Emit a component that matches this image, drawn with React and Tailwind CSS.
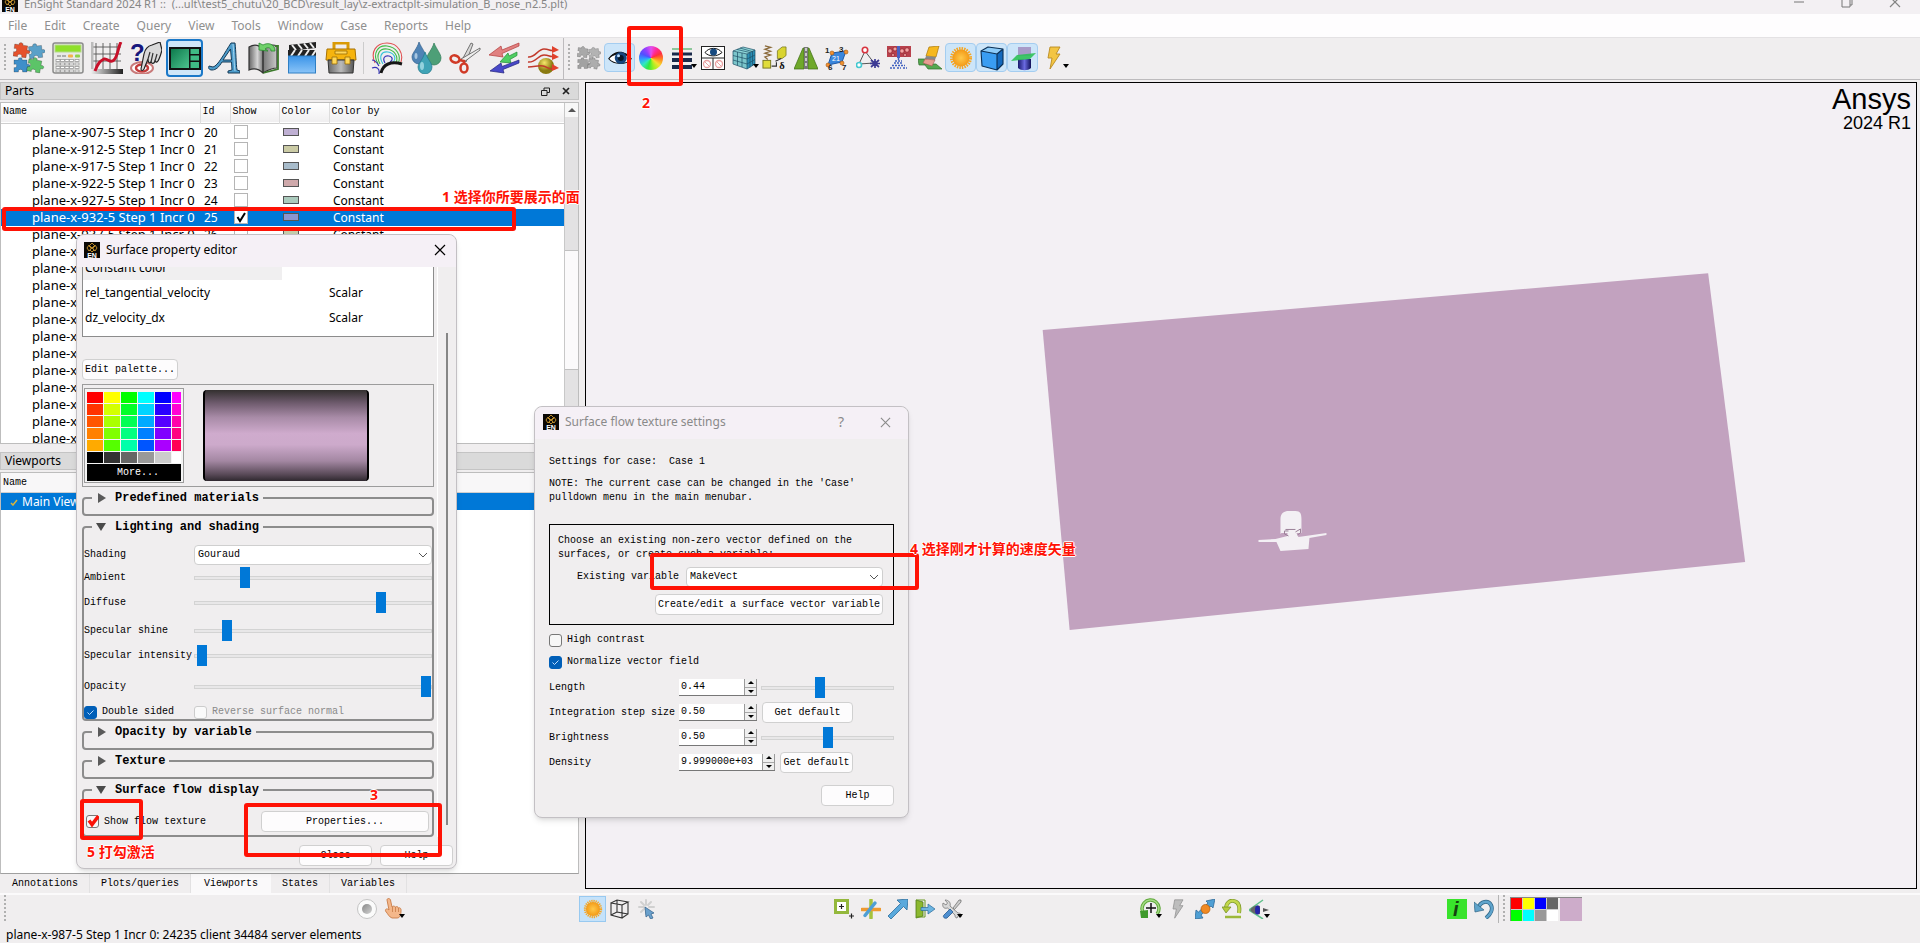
import React from "react";

const UI = "font-['Noto_Sans','Noto_Sans_CJK_SC',sans-serif]";
const MONO = "font-['Liberation_Mono','Noto_Sans_CJK_SC',monospace]";

/* ---------- icons ---------- */

function Svg({ s = 32, box = 32, children }) {
  return (
    <svg width={s} height={s} viewBox={`0 0 ${box} ${box}`} fill="none" aria-hidden="true" className="shrink-0">
      {children}
    </svg>
  );
}

const PIECE =
  "M1 3H5.5C4 0 10.500 0 9 3H14V7.500C18 6 18 12 14 10.500V15H9.500C11 11.500 4 11.500 5.500 15H1V10.500C4.500 12 4.500 5.500 1 7.500Z";

function Puzzle({ s, c }) {
  return (
    <Svg s={s}>
      <g stroke="#0004" strokeWidth=".8">
        <path d={PIECE} fill={c[0]} transform="rotate(8 8 8)" />
        <path d={PIECE} fill={c[1]} transform="translate(15 1) rotate(-6 8 8)" />
        <path d={PIECE} fill={c[2]} transform="translate(0 15)" />
        <path d={PIECE} fill={c[3]} transform="translate(14 15) rotate(10 8 8)" />
      </g>
    </Svg>
  );
}

const Calculator = () => (
  <Svg>
    <rect x="1" y="1" width="30" height="30" rx="2" fill="#e9e9e7" stroke="#8b8b8b" strokeWidth="1.500" />
    <rect x="3" y="3" width="26" height="7" fill="#8fe02a" stroke="#b5d98a" />
    <path d="M5 14h4M10 14h4" stroke="#999" strokeWidth="1.500" />
    <rect x="16" y="12.500" width="5" height="3" rx="1" fill="#f3b24a" />
    <rect x="23" y="12.500" width="5" height="3" rx="1" fill="#8fd24a" />
    <g fill="#fff" stroke="#9a9a9a" strokeWidth=".8">
      {[17.500, 21, 24.500, 28].map((y) => [4, 8.500, 13, 17.500, 23].map((x) => <rect key={x + "-" + y} x={x} y={y} width="4" height="2" />))}
    </g>
  </Svg>
);

const Plot = () => (
  <Svg>
    <path d="M5 1v26M12 1v26M19 1v26M26 1v26M2 5h28M2 12h28M2 19h28" stroke="#555" strokeWidth=".9" />
    <path d="M1 0v28" stroke="#bbb" strokeWidth="3" />
    <rect x="0" y="27" width="32" height="5" fill="url(#plotg)" />
    <path d="M4 29C7 21 9 19 13 17C17 16 19 22 23 18S27 5 30 0" stroke="#c8102a" strokeWidth="3" />
    <defs><linearGradient id="plotg"><stop stopColor="#eee" /><stop offset="1" stopColor="#222" /></linearGradient></defs>
  </Svg>
);

const QueryHand = () => (
  <Svg>
    <text x="0" y="19" fontSize="24" fontWeight="bold" fill="#17177c" fontFamily="Liberation Sans">?</text>
    <ellipse cx="12" cy="26" rx="11" ry="6" fill="#fff" stroke="#c97a7a" strokeWidth="2" />
    <ellipse cx="12" cy="26" rx="6" ry="3.500" stroke="#c43c3c" strokeWidth="2.500" />
    <path d="M11 27L14 12C15 7 18 4 22 3L30 0L32 8C31 12 30 15 29 17C28 20 26 21 25 19C24 22 22 22 21 20C19 22 18 20 18 17L14 27C13 29 11 29 11 27Z" fill="#d9d9d9" stroke="#222" strokeWidth="1.200" />
    <path d="M18 17L20 10M21 20L23 11M25 19L27 12" stroke="#333" strokeWidth="1.200" />
  </Svg>
);

const ViewportIcon = () => (
  <Svg>
    <rect x="0" y="5" width="32" height="23" fill="#111" />
    <rect x="2" y="7" width="18" height="19" fill="url(#vpg)" />
    <rect x="21.500" y="7" width="8.500" height="5" fill="#3fba85" />
    <rect x="21.500" y="13.500" width="8.500" height="5" fill="#3fba85" />
    <rect x="21.500" y="20" width="8.500" height="6" fill="#3fba85" />
    <defs><linearGradient id="vpg" x2="1" y2="1"><stop stopColor="#0d7a4c" /><stop offset="1" stopColor="#4cc38e" /></linearGradient></defs>
  </Svg>
);

const LetterA = () => (
  <Svg>
    <path d="M23 1L27 1C28 9 28 22 29 28L32 29V31H20V29L24 28L23.500 20H14C11 25 8 28 4 28C1 28 0 26 1 24L5 25C10 24 17 10 23 1ZM15 18H23.500L22.500 7Z" fill="#4c9ccb" stroke="#173b57" strokeWidth="1" fillRule="evenodd" />
    <path d="M25 2C26 12 26 22 27 29" stroke="#a7d6f0" strokeWidth="1" />
  </Svg>
);

const Book = () => (
  <Svg>
    <path d="M2 5C7 2 12 3 16 7C20 3 26 2 30 4V26C25 26 21 28 16 31C12 27 7 26 2 28Z" fill="url(#bkg)" stroke="#333" strokeWidth="1.200" />
    <path d="M28 4h3v23l-15 4" stroke="#3c7a2c" strokeWidth="1.800" />
    <path d="M16 7v24" stroke="#333" strokeWidth="1.500" />
    <path d="M12 8V1l4 2c5-3 12-1 12 6h-4c0-4-4-4-6-2l3 2z" fill="#6fd06a" stroke="#2a8a30" strokeWidth=".8" />
    <defs><linearGradient id="bkg"><stop stopColor="#666" /><stop offset=".3" stopColor="#d5d5d5" /><stop offset=".5" stopColor="#777" /><stop offset="1" stopColor="#c9c9c9" /></linearGradient></defs>
  </Svg>
);

const Clapper = () => (
  <Svg>
    <path d="M3 3L30 0V6L3 9Z" fill="#222" />
    <path d="M6 3l4 5M12 2l4 5M18 1.500l4 5M24 1l4 5" stroke="#eee" strokeWidth="2" />
    <rect x="2" y="8" width="28" height="6" fill="#222" />
    <path d="M9 8l-4 6M16 8l-4 6M23 8l-4 6M30 8l-4 6" stroke="#eee" strokeWidth="2" />
    <rect x="2.500" y="14" width="27" height="17" fill="url(#clg)" stroke="#2f7fc4" />
    <defs><linearGradient id="clg" x2="0" y2="1"><stop stopColor="#3b94e8" /><stop offset="1" stopColor="#8ac4f8" /></linearGradient></defs>
  </Svg>
);

const Toolbox = () => (
  <Svg>
    <path d="M9 8V1h14v7" stroke="#d99a06" strokeWidth="3" />
    <path d="M2 7h28l1 11H1z" fill="#f6b40e" stroke="#a87304" />
    <path d="M3 18h26l-1 13H4z" fill="url(#tbg)" stroke="#333" />
    <path d="M10 9h12v3H10zM7 15h5v7H7zM20 15h5v7h-5z" fill="#ffd75a" stroke="#9a6c05" strokeWidth=".8" />
    <defs><linearGradient id="tbg"><stop stopColor="#666" /><stop offset=".5" stopColor="#bbb" /><stop offset="1" stopColor="#555" /></linearGradient></defs>
  </Svg>
);

const Contours = () => (
  <Svg>
    <path d="M4 21C-1 10 5 1 16 1S34 12 29 22" stroke="#e05252" strokeWidth="1.100" />
    <path d="M7 22C1 11 7 3 16 4S31 13 27 22M9 22C4 12 9 6 16 7S28 14 25 21" stroke="#3fba45" strokeWidth="1.100" />
    <path d="M12 22C7 14 11 9 17 10S26 16 22 20" stroke="#33c3d8" strokeWidth="1.100" />
    <path d="M14 21C11 16 14 13 18 14S22 18 19 20M1 18c4 0 5 3 7 6M1 26c5-2 8 1 7 6" stroke="#3535b8" strokeWidth="1.200" />
    <path d="M10 31C12 22 20 19 31 22" stroke="#151515" strokeWidth="3" />
  </Svg>
);

const Drops = () => (
  <Svg>
    <path d="M9 0C12 7 16 11 16 15a7 7 0 0 1-14 0C2 11 7 7 9 0Z" fill="#4f83b5" stroke="#37628c" strokeWidth=".7" />
    <path d="M24 1C27 8 31 12 31 16a7 7 0 0 1-14 0C17 12 22 8 24 1Z" fill="#4d9f77" stroke="#2f7a56" strokeWidth=".7" />
    <path d="M15 10C18 18 22 21 22 25a7 7 0 0 1-14 0C8 21 13 18 15 10Z" fill="#3fa3b6" stroke="#23798a" strokeWidth=".7" />
    <ellipse cx="12" cy="24" rx="2" ry="4" fill="#b8e5ee" opacity=".7" />
    <ellipse cx="6" cy="14" rx="1.500" ry="3" fill="#cfe2f3" opacity=".7" />
  </Svg>
);

const Scissors = () => (
  <Svg>
    <path d="M22 1L13 18L17 20L24 2Z" fill="#d8d8d8" stroke="#555" strokeWidth=".8" />
    <path d="M31 6L12 17L15 20L31 8Z" fill="#eee" stroke="#555" strokeWidth=".8" />
    <ellipse cx="6" cy="17" rx="4.500" ry="3.500" stroke="#d03a26" strokeWidth="2.500" transform="rotate(20 6 17)" />
    <ellipse cx="15" cy="26" rx="3.500" ry="4.500" stroke="#d03a26" strokeWidth="2.500" />
    <path d="M10 18l5 1v3" stroke="#d03a26" strokeWidth="2.500" />
  </Svg>
);

const Vectors = () => (
  <Svg>
    <path d="M31 1L14 8L13 4L1 13L15 15L14 11.500L31 4Z" fill="#e08080" stroke="#b33a3a" strokeWidth=".7" />
    <path d="M29 10L21 14L20 11L12 20L23 21L22 17.500L29 13.500Z" fill="#4fce62" stroke="#248d36" strokeWidth=".7" />
    <path d="M31 18L14 24.500L13 21L2 29L16 31L15 27.500L31 21Z" fill="#4848c8" stroke="#22227c" strokeWidth=".7" />
  </Svg>
);

const FlowBall = () => (
  <Svg>
    <circle cx="19" cy="24" r="8" fill="url(#fbg)" />
    <path d="M1 15C8 16 11 7 17 7S23 10 28 8M1 20C9 21 11 13 17 13S23 16 28 14M1 25C8 25 11 23 16 24S23 29 29 26" stroke="#c23a2c" strokeWidth="1.500" />
    <path d="M25 4l7 4-7 3zM25 11l7 4-7 3zM25 22l7 4-7 3z" fill="#e0402c" />
    <defs><radialGradient id="fbg" cx=".4" cy=".3"><stop stopColor="#f7e76a" /><stop offset="1" stopColor="#8a7a10" /></radialGradient></defs>
  </Svg>
);

const Eye = () => (
  <Svg s={24}>
    <path d="M1 17C7 8 22 5 31 17C24 26 8 25 1 17Z" fill="#fff" stroke="#111" strokeWidth="1.500" />
    <path d="M1 17C7 6 22 3 31 17C22 9 9 9 1 17Z" fill="#111" />
    <circle cx="17" cy="16" r="8" fill="#16457c" />
    <circle cx="17" cy="16" r="4" fill="#071726" />
    <circle cx="14" cy="13" r="2" fill="#bfe0ff" />
  </Svg>
);

const ColorWheel = () => (
  <span className="h-6 w-6 rounded-full bg-[conic-gradient(from_0deg,#e050f0,#ff2a98,#ff3040,#ff8a20,#f4e030,#a0f020,#30e840,#30e8c0,#30a0ff,#5050ff,#9040ff,#e050f0)]" />
);

const LineWidths = () => (
  <Svg s={24} box={24}>
    <path d="M2 3h20" stroke="#8cc79a" strokeWidth="2" />
    <path d="M2 8h20" stroke="#1b2a4a" strokeWidth="3" />
    <path d="M2 14h20M2 21h20" stroke="#1b2a4a" strokeWidth="4" />
  </Svg>
);

const EyeGrid = () => (
  <Svg s={24} box={24}>
    <rect x=".500" y=".500" width="23" height="23" fill="#fff" stroke="#222" />
    <path d="M0 12h24M12 12v12" stroke="#222" />
    <path d="M4 6.500C8 1 17 1 21 6.500C16 11 8 11 4 6.500Z" fill="#fff" stroke="#111" />
    <circle cx="12.500" cy="6" r="3.500" fill="#174a80" />
    <circle cx="6" cy="18" r="3.500" stroke="#e9a0a0" strokeWidth="1.300" /><path d="M4 16l4 4" stroke="#e9a0a0" />
    <circle cx="18" cy="18" r="3.500" stroke="#e9a0a0" strokeWidth="1.300" /><path d="M16 16l4 4" stroke="#e9a0a0" />
  </Svg>
);

const GridCube = () => (
  <Svg s={24} box={24}>
    <path d="M1 5L11 1L23 4L15 8Z" fill="#8fd7d9" /><path d="M1 5L15 8V23L1 18Z" fill="#7cc6cb" /><path d="M15 8L23 4V18L15 23Z" fill="#2b8fb5" />
    <path d="M1 5L15 8V23L1 18ZM1 5L11 1L23 4L15 8M23 4V18L15 23M1 9.500L15 13L23 9M1 14L15 18L23 13.500M5.500 6V19.500M10 7V21M18 6.500V21.500M20.500 5V20M5 3.500L18 6.500M8 2L20 5.500" stroke="#1c4f66" strokeWidth=".7" />
  </Svg>
);

const Spring = () => (
  <Svg s={25} box={26}>
    <path d="M3 1L9 2.500L3 4.500L9 6.500L3 8.500L9 10.500L3 12.500L6 15" stroke="#8a6a3a" strokeWidth="1.300" />
    <rect x="1" y="16" width="8" height="8" fill="#e0dc3a" stroke="#7a7820" />
    <path d="M16 6l5-4 4 0v9l-4 3h-5z" fill="#d9d430" stroke="#7a7820" strokeWidth=".8" />
    <path d="M20 14L14 17M10 22h5v-4" stroke="#333" strokeWidth="1.200" />
    <text x="18" y="25" fontSize="11" fontWeight="bold" fill="#111" fontFamily="Liberation Serif">δ</text>
  </Svg>
);

const Road = () => (
  <Svg s={24} box={24}>
    <path d="M9 2L0 23H10V2ZM15 2L24 23H14V2Z" fill="#6fa82a" stroke="#3c6b12" strokeWidth=".7" />
    <path d="M10 1h4v22h-4z" fill="#777" /><path d="M12 2v20" stroke="#fff" strokeWidth="1.200" strokeDasharray="3 2" />
  </Svg>
);

const Nodes = () => (
  <Svg s={24} box={24}>
    <path d="M7 7L21 5L17 16L3 19Z" fill="#3a86dc" stroke="#1d5aa8" />
    <g fill="#f09030" stroke="#a3560e" strokeWidth=".6"><circle cx="7" cy="7" r="2" /><circle cx="21" cy="6" r="2" /><circle cx="3" cy="19" r="2" /><circle cx="17" cy="17" r="2" /></g>
    <g fontSize="8" fontWeight="bold" fill="#222" fontFamily="Liberation Sans"><text x="0" y="7">1</text><text x="14" y="6">3</text><text x="3" y="24">6</text><text x="17" y="24">7</text></g>
    <text x="7" y="15" fontSize="7" fill="#fff" fontFamily="Liberation Sans">21</text>
  </Svg>
);

const Triangle3 = () => (
  <Svg s={24} box={24}>
    <path d="M9 5L3 18L18 17Z" stroke="#555" strokeWidth="1" />
    <circle cx="9" cy="4" r="2.700" fill="#fff" stroke="#d8333f" strokeWidth="1.600" />
    <circle cx="3" cy="19" r="2.500" fill="#fff" stroke="#44c8d0" strokeWidth="1.600" />
    <path d="M15 14l8 7M23 14l-8 7M19 13v9M14 17.500h10" stroke="#3d3a94" strokeWidth="1.700" />
  </Svg>
);

const Sprinkler = () => (
  <Svg s={24} box={24}>
    <rect x="0" y="0" width="24" height="11" fill="#b8414c" />
    <g fill="#f4a3a3" stroke="#7d1620" strokeWidth=".6"><circle cx="3" cy="5" r="2.200" /><circle cx="8" cy="3" r="2" /><circle cx="15" cy="5" r="2.200" /><circle cx="20" cy="4" r="2.200" /><circle cx="6" cy="9" r="1.500" /><circle cx="18" cy="9" r="1.500" /></g>
    <rect x="10" y="0" width="3" height="12" fill="#4a60c0" />
    <path d="M11.500 12v3M8 15h7M7 17h9M5 19.500h13M3 22h5M10 22h4M16 22h4" stroke="#3f60c0" strokeWidth="1.500" strokeDasharray="2 1" />
  </Svg>
);

const Eraser = () => (
  <Svg s={24} box={24}>
    <path d="M0 13H9L6 18H18L24 23H10L7 19H1Z" fill="#55a850" stroke="#2f6f2c" strokeWidth=".7" />
    <path d="M11 1L21 0L18 11L8 10Z" fill="#f6b81e" stroke="#a9770a" strokeWidth=".7" />
    <path d="M8 10L18 11L17 14L7 13Z" fill="#888" /><path d="M7 13L17 14L14 20L5 17Z" fill="#e79d92" stroke="#a05a50" strokeWidth=".6" />
  </Svg>
);

const Sun = ({ s = 24 }) => (
  <Svg s={s} box={24}>
    <circle cx="12" cy="12" r="9.500" stroke="#f6a623" strokeWidth="3" strokeDasharray="1.500 1" />
    <circle cx="12" cy="12" r="8.500" fill="url(#sung)" />
    <defs><radialGradient id="sung"><stop stopColor="#ffc94a" /><stop offset="1" stopColor="#f39a17" /></radialGradient></defs>
  </Svg>
);

const BlueCube = () => (
  <Svg s={26} box={26}>
    <path d="M2 6L9 2L24 4L18 9Z" fill="#8ccbf9" /><path d="M2 6L18 9V25L3 21Z" fill="#3a9df2" /><path d="M18 9L24 4V19L18 25Z" fill="#1469bd" />
    <path d="M2 6L9 2L24 4L18 9ZM2 6L3 21L18 25V9M24 4V19L18 25" stroke="#0a2f55" strokeWidth="1.100" strokeLinejoin="round" />
  </Svg>
);

const ClipCylinder = () => (
  <Svg s={26} box={26}>
    <path d="M8 2h13v9H8z" fill="#a79ac8" /><path d="M8 14h13v9c-3 3-10 3-13 0z" fill="url(#cyg)" />
    <path d="M7 10L26 8L20 14L1 16Z" fill="#2fc158" opacity=".9" />
    <defs><linearGradient id="cyg"><stop stopColor="#17176b" /><stop offset=".5" stopColor="#6a6ae0" /><stop offset="1" stopColor="#101058" /></linearGradient></defs>
  </Svg>
);

const Bolt = ({ s = 24, c = "#f3c544", e = "#b98a20" }) => (
  <Svg s={s} box={24}>
    <path d="M8 1H18L14 8H18L8 23L10 12H6Z" fill={c} stroke={e} strokeWidth=".9" strokeLinejoin="round" />
  </Svg>
);

const Record = () => (
  <Svg s={22} box={22}>
    <circle cx="11" cy="11" r="9.500" fill="#fbfbfb" stroke="#c4c4c4" /><circle cx="11" cy="11" r="5" fill="url(#recg)" />
    <defs><linearGradient id="recg" x2="1" y2="1"><stop stopColor="#888" /><stop offset="1" stopColor="#d2d2d2" /></linearGradient></defs>
  </Svg>
);

const Hand = () => (
  <Svg s={22} box={22}>
    <path d="M4 2C4 0 7 0 7.500 2L9 9C11 7 12 9 12.500 9C14 8 15 9 15.500 10C17 9 18.500 11 18 13C18 17 17 20 14 20H9C6 19 5 16 2.500 13C2 11 4 10 6 12Z" fill="#f4b78a" stroke="#c77c48" strokeWidth=".9" />
    <path d="M9.500 9v5M12.500 9v5M15.500 10v4" stroke="#c77c48" strokeWidth=".8" />
  </Svg>
);

const WireCube = () => (
  <Svg s={20} box={20}>
    <path d="M1 4L12 6V19L1 16ZM1 4L7 1L18 3L12 6M18 3V15L12 19M7 1V13L18 15M7 13L1 16" stroke="#333" strokeWidth="1.100" />
  </Svg>
);

const ClickBurst = () => (
  <Svg s={20} box={20}>
    <path d="M9 1v5M9 11v4M2 8h5M12 8h5M4 3l3 3M14 3l-3 3M4 13l3-3" stroke="#d0d0d0" strokeWidth="2" strokeLinecap="round" />
    <path d="M8 8L17 14L14 15L16 19L13.500 20L11.500 16L9 18Z" fill="#6aa0cc" stroke="#2f5f8a" strokeWidth=".7" />
  </Svg>
);

const AddFrame = () => (
  <Svg s={20} box={20}>
    <rect x="1.500" y="1.500" width="12" height="12" fill="#fff" stroke="#94b83c" strokeWidth="3" />
    <path d="M7.500 5v5M5 7.500h5M17.500 14.500v5M15 17h5" stroke="#222" strokeWidth="1.200" />
  </Svg>
);

const Axes = () => (
  <Svg s={20} box={20}>
    <path d="M10 1V19" stroke="#a6c23c" strokeWidth="3.500" strokeLinecap="round" /><path d="M1 10.500H19" stroke="#ef9a30" strokeWidth="3.500" strokeLinecap="round" /><path d="M4 16.500L14 4" stroke="#4f9fd4" strokeWidth="3.500" strokeLinecap="round" />
  </Svg>
);

const ArrowUp = () => (
  <Svg s={20} box={20}>
    <path d="M9 1L20 0L19 11L15.500 7.500L3 20L0 17L12.500 4.500Z" fill="#5aa9dc" stroke="#2a6c9c" strokeWidth=".8" />
  </Svg>
);

const DoorArrow = () => (
  <Svg s={20} box={20}>
    <path d="M1 1L8 3V17L1 19Z" fill="#8cb82e" stroke="#4f7a16" strokeWidth=".8" /><path d="M1 1h9v17h-9" stroke="#6b9a22" />
    <path d="M6 8.500H13V5L20 10L13 15V11.500H6Z" fill="#6cb4e0" stroke="#2a6c9c" strokeWidth=".7" />
  </Svg>
);

const Wrench = () => (
  <Svg s={20} box={20}>
    <path d="M3 1C7 1 9 4 8 7L16 14C19 14 20 16 19 18L16.500 16.500L15 19C13 19 13 17 13 16L5.500 9C2 10 0 8 1 4L4 6L5.500 4Z" fill="#d8d8d8" stroke="#777" strokeWidth=".8" />
    <path d="M19 1L17 1L11 9L12.500 10.500L19 3Z" fill="#ccc" stroke="#666" strokeWidth=".7" />
    <path d="M8 10L11 13L5 19C3 20 0 18 2 16Z" fill="#4f8fd0" stroke="#27598f" strokeWidth=".8" />
  </Svg>
);

const ResetCircle = () => (
  <Svg s={22} box={22}>
    <path d="M5 17A8.500 8.500 0 1 1 17 16" stroke="#5fa83a" strokeWidth="3.500" /><path d="M5 17A8.500 8.500 0 1 1 17 16" stroke="#a5dc85" strokeWidth="1.500" /><path d="M0 13L8 12L8 20L1 20Z" fill="#3f9a2c" />
    <path d="M11 5v10M6 10h10" stroke="#111" strokeWidth="1.500" />
  </Svg>
);

const BallArrows = () => (
  <Svg s={20} box={20}>
    <path d="M11 2L20 0L18 9L16 7L6 16L8 19L0 20L1 11L3.500 13L13 4Z" fill="#4f9fd4" stroke="#236090" strokeWidth=".7" />
    <circle cx="10.500" cy="10" r="4.500" fill="#f08a24" stroke="#b05c0c" strokeWidth=".7" />
  </Svg>
);

const TurnBack = () => (
  <Svg s={20} box={20}>
    <path d="M4 10C4 3 9 1 12 2C17 3 18 8 17 14" stroke="#7f9a2c" strokeWidth="4" /><path d="M4 10C4 3 9 1 12 2C17 3 18 8 17 14" stroke="#c3d84c" strokeWidth="2.500" />
    <path d="M0 8H9L4 14Z" fill="#b5cc3c" stroke="#6f8a1c" strokeWidth=".7" /><path d="M3 18h16" stroke="#9cb83a" strokeWidth="2.500" />
  </Svg>
);

const ViewCone = () => (
  <Svg s={20} box={20}>
    <path d="M0 11L14 1M0 11L14 20" stroke="#5fc08a" strokeWidth="1.500" /><path d="M1 11C4 6 9 6 11 7V15C8 16 4 15 1 11Z" fill="#666" />
    <ellipse cx="8.500" cy="11" rx="2.500" ry="4.500" fill="#2424a8" /><path d="M14 9l6 2-6 2z" fill="#555" />
  </Svg>
);

const InfoIcon = () => (
  <Svg s={20} box={20}>
    <rect width="20" height="20" fill="#39e32c" />
    <text x="6" y="17" fontSize="20" fontWeight="bold" fontStyle="italic" fill="#15400f" fontFamily="Liberation Sans">i</text>
  </Svg>
);

const Undo = () => (
  <Svg s={20} box={20}>
    <path d="M4 9C7 2 14 1 17 6C19 10 17 15 12 19" stroke="#2f6484" strokeWidth="4" /><path d="M4 9C7 2 14 1 17 6C19 10 17 15 12 19" stroke="#5fa4cc" strokeWidth="2.500" />
    <path d="M0 3L1 13L10 11Z" fill="#5fa4cc" stroke="#2f6484" strokeWidth=".7" />
  </Svg>
);

const EnLogo = () => (
  <Svg s={16} box={16}>
    <rect width="16" height="16" fill="#0b0905" />
    <path d="M8 1L11 4L8 7L5 4ZM5 3L8 6L5 9L3 6ZM11 3L13 6L11 9L8 6ZM8 5L10 8L8 10L6 8Z" stroke="#b98a2a" strokeWidth="1" />
    <text x="8" y="15.500" textAnchor="middle" fontSize="7" fontWeight="bold" fill="#fff" fontFamily="Liberation Sans">EN</text>
  </Svg>
);

const CloseX = ({ s = 12 }) => (
  <Svg s={s} box={12}><path d="M1 1L11 11M11 1L1 11" stroke="currentColor" strokeWidth="1.200" /></Svg>
);

const Chevron = () => (
  <svg width="10" height="6" viewBox="0 0 10 6" fill="none" aria-hidden="true" className="pointer-events-none absolute top-1/2 right-1 -translate-y-1/2">
    <path d="M1 1l4 4 4-4" stroke="#555" />
  </svg>
);

/* ---------- controls ---------- */

function Grip() {
  return <span className="h-7 w-0.5 shrink-0 bg-[repeating-linear-gradient(#b0b0b0_0_2px,transparent_2px_4px)]" />;
}

function BigTool({ label, active, children }) {
  return (
    <button aria-label={label} className="flex w-[39px] shrink-0 items-center justify-center">
      <span className={active ? "grid h-[38px] w-[37px] place-items-center rounded-sm border-2 border-[#1b78c8] bg-[#cfe6f8]" : "grid h-[38px] w-[37px] place-items-center"}>
        {children}
      </span>
    </button>
  );
}

function SmallTool({ label, active, menu, children }) {
  return (
    <button
      aria-label={label}
      className={
        active
          ? "relative grid h-[29px] w-[31px] shrink-0 place-items-center rounded-sm border border-[#a4cdf0] bg-[#cce5f9]"
          : "relative grid h-[29px] w-[31px] shrink-0 place-items-center"
      }
    >
      {children}
      {menu && <span className="absolute right-0 bottom-1 border-x-[3px] border-t-4 border-x-transparent border-t-black" />}
    </button>
  );
}

function TinyTool({ label, active, menu, children }) {
  return (
    <button aria-label={label} className={active ? "relative grid h-[26px] w-[27px] place-items-center border border-[#98c9f0] bg-[#c5e2fa]" : "relative grid h-[26px] w-[27px] place-items-center"}>
      {children}
      {menu && <span className="absolute right-0.5 bottom-1 border-x-[3px] border-t-4 border-x-transparent border-t-black" />}
    </button>
  );
}

function Btn({ className, children }) {
  return (
    <button className={"flex h-[21px] items-center justify-center rounded border border-[#d0d0d0] bg-[#fdfcfd] whitespace-nowrap " + className}>
      {children}
    </button>
  );
}

function Check({ id, label, checked, disabled, tone }) {
  const base = "col-start-1 row-start-1 h-[13px] w-[13px] appearance-none rounded-[3px] border ";
  const look = checked && !tone ? "border-[#005fb8] bg-[#005fb8]" : disabled ? "border-[#cccccc] bg-[#fafafa]" : "border-[#777777] bg-[#f7f7f7]";
  return (
    <span className="flex items-center gap-[5px]">
      <span className="grid place-items-center">
        <input id={id} type="checkbox" defaultChecked={checked} disabled={disabled} className={base + look} />
        {checked && (
          <svg width="13" height="13" viewBox="0 0 13 13" fill="none" className="pointer-events-none col-start-1 row-start-1" aria-hidden="true">
            {tone === "red" ? <path d="M3 5.500L6 9.500L12.500 1" stroke="#fb1208" strokeWidth="3.500" /> : <path d="M3.500 6.500l2 2 4-4" stroke="#bcdcff" />}
          </svg>
        )}
      </span>
      <label htmlFor={id} className={disabled ? "text-[#8a8a8a]" : "text-black"}>{label}</label>
    </span>
  );
}

function Slider({ id, value }) {
  return (
    <input
      id={id}
      type="range"
      defaultValue={value}
      className="h-[21px] w-full min-w-0 appearance-none bg-transparent [&::-webkit-slider-runnable-track]:h-1 [&::-webkit-slider-runnable-track]:border [&::-webkit-slider-runnable-track]:border-[#d3d3d3] [&::-webkit-slider-runnable-track]:bg-[#e8e7e8] [&::-webkit-slider-thumb]:-mt-[10px] [&::-webkit-slider-thumb]:h-[21px] [&::-webkit-slider-thumb]:w-[10px] [&::-webkit-slider-thumb]:appearance-none [&::-webkit-slider-thumb]:bg-[#0078d7]"
    />
  );
}

function Select({ id, value, className }) {
  return (
    <span className={"relative block " + className}>
      <select id={id} className="block h-5 w-full appearance-none rounded-sm border border-[#cfcfcf] bg-white px-[3px]">
        <option>{value}</option>
      </select>
      <Chevron />
    </span>
  );
}

function Spin({ id, value, className }) {
  return (
    <span className={"flex h-[17px] shrink-0 border-b border-[#777777] bg-white " + className}>
      <input id={id} defaultValue={value} className="w-full min-w-0 bg-transparent pl-0.5 outline-none" />
      <span className="flex w-[13px] shrink-0 flex-col border-r border-l border-[#9a9a9a] bg-[#efefef]">
        <button aria-label={"Increase " + id} className="grid flex-1 place-items-center border-b border-[#a8a8a8]">
          <span className="border-x-[3px] border-b-[3px] border-x-transparent border-b-black" />
        </button>
        <button aria-label={"Decrease " + id} className="grid flex-1 place-items-center">
          <span className="border-x-[3px] border-t-[3px] border-x-transparent border-t-black" />
        </button>
      </span>
    </span>
  );
}

function Group({ title, open, className, children }) {
  return (
    <fieldset className={"rounded border-2 border-[#8c8c8c] " + className}>
      <legend className="ml-2 px-1">
        <button className="flex h-3.5 items-center gap-[9px] text-xs leading-[14px] font-bold">
          {open ? (
            <span className="border-x-[5px] border-t-8 border-x-transparent border-t-[#4a4a4a]" />
          ) : (
            <span className="ml-0.5 border-y-[5px] border-l-8 border-y-transparent border-l-[#5a5a5a]" />
          )}
          {title}
        </button>
      </legend>
      {children}
    </fieldset>
  );
}

/* ---------- panels ---------- */

function DockHeader({ title }) {
  return (
    <div className="flex h-[18px] items-center justify-between border border-[#c4c4c4] bg-[#dadada] pr-2 pl-1 text-xs">
      <span>{title}</span>
      <span className="flex items-center gap-3">
        <button aria-label={"Undock " + title}>
          <Svg s={9} box={9}><path d="M3 3V1h5.500v4.500H6M.500 3.500H6v5H.500z" stroke="#222" /></Svg>
        </button>
        <button aria-label={"Close " + title}>
          <Svg s={8} box={8}><path d="M1 1l6 6M7 1L1 7" stroke="#222" strokeWidth="1.700" /></Svg>
        </button>
      </span>
    </div>
  );
}

const SWATCHES = ["#bfb0d3", "#cbcba5", "#a8bccb", "#cfa9ab", "#abcbbd", "#8b95d0", "#c3ccab"];
const PARTS = Array.from({ length: 19 }, (_, i) => ({
  name: `plane-x-${907 + i * 5}-5 Step 1 Incr 0`,
  id: 20 + i,
  color: SWATCHES[i % 7],
  on: i === 5,
}));

function PartsTable() {
  return (
    <div className="flex h-[342px] overflow-hidden border border-[#bdbdbd] bg-white">
      <table className="w-full table-fixed border-collapse self-start text-left">
        <colgroup>
          <col className="w-[199px]" /><col className="w-[30px]" /><col className="w-[49px]" /><col className="w-[50px]" /><col />
        </colgroup>
        <thead className={"text-[10px] leading-[14px] " + MONO}>
          <tr className="h-5 border-b border-[#cfcfcf] bg-linear-to-b from-white to-[#f0eff0]">
            {["Name", "Id", "Show", "Color", "Color by"].map((h) => (
              <th key={h} className="border-r border-[#dddddd] pb-0.5 pl-0.5 font-normal last:border-r-0">{h}</th>
            ))}
          </tr>
        </thead>
        <tbody className="text-xs leading-[17px]">
          {PARTS.map((p) => (
            <tr key={p.id} className={p.on ? "h-[17px] bg-[#0078d7] text-white" : "h-[17px]"}>
              <td className="pl-[31px] text-[13px] leading-[17px] whitespace-nowrap">{p.name}</td>
              <td className="pl-1">{p.id}</td>
              <td className="pl-1">
                <span className="grid h-[15px] w-[14px]">
                  <input type="checkbox" defaultChecked={p.on} aria-label={"Show " + p.name} className="col-start-1 row-start-1 h-[14px] w-[14px] appearance-none border border-[#b5b5b5] bg-white" />
                  {p.on && (
                    <svg width="14" height="14" viewBox="0 0 14 14" fill="none" className="pointer-events-none col-start-1 row-start-1" aria-hidden="true">
                      <path d="M3.500 7L6 11L11 3" stroke="#000" strokeWidth="2" />
                    </svg>
                  )}
                </span>
              </td>
              <td className="pl-1"><span className="block h-2 w-4 border border-[#555555]" style={{ backgroundColor: p.color }} /></td>
              <td className="pl-1">Constant</td>
            </tr>
          ))}
        </tbody>
      </table>
      <div className="flex w-[14px] shrink-0 flex-col border-l border-[#c8c8c8] bg-[#e3e2e3]">
        <span className="grid h-[14px] place-items-center bg-[#f7f7f7]">
          <span className="border-x-[4px] border-b-[4px] border-x-transparent border-b-[#555555]" />
        </span>
        <span className="mt-[133px] h-[120px] border-y border-[#c0c0c0] bg-[#fbfafb]" />
      </div>
    </div>
  );
}

function LeftDock() {
  return (
    <section className="flex w-[579px] shrink-0 flex-col pt-0.5">
      <DockHeader title="Parts" />
      <div className="mt-0.5"><PartsTable /></div>
      <div className="mt-2"><DockHeader title="Viewports" /></div>
      <div className="mt-0.5 flex-1 border border-[#bdbdbd] border-b-[#a0a0a0] bg-white">
        <table className="w-full">
          <thead className={"text-left text-[10px] " + MONO}>
            <tr className="h-[19px] border-b border-[#cfcfcf] bg-[#f8f7f8]"><th className="pl-0.5 font-normal">Name</th></tr>
          </thead>
          <tbody className="text-xs">
            <tr className="h-[17px] bg-[#0078d7] leading-[17px] text-white">
              <td className="pl-2">
                <span className="flex items-center gap-[3px]">
                  <Svg s={10} box={10}><path d="M2 7l2 2 4-5" stroke="#d9b53a" strokeWidth="1.500" /></Svg>
                  Main View
                </span>
              </td>
            </tr>
          </tbody>
        </table>
      </div>
      <nav className={"flex h-[19px] items-stretch pl-px text-[10px] " + MONO}>
        {["Annotations", "Plots/queries", "Viewports", "States", "Variables"].map((t) => (
          <button key={t} className={t === "Viewports" ? "bg-[#faf9fa] px-[13px]" : "border-r border-[#e2e1e2] px-[11px]"}>{t}</button>
        ))}
      </nav>
    </section>
  );
}

function Scene() {
  return (
    <main className="relative ml-1.5 flex flex-1 flex-col border border-black bg-[#f3f0f4]">
      <svg viewBox="586 83 1331 805" className="h-full w-full flex-1" aria-label="Cut plane x-932-5">
        <path d="M1043 330L1709 273L1746 562L1070 630Z" fill="#c2a2bf" />
        <g fill="#f3f0f4">
          <path d="M1281 534V519C1281 513 1285 511 1289 511H1296C1301 511 1302 514 1302 519V533H1282Z" />
          <path d="M1259 540L1276 539L1288 536V531H1296L1299 537L1327 533V535L1310 538L1309 549L1281 551L1277 542L1259 542Z" />
        </g>
        <path d="M1289 536L1285 534V531H1289M1286 529.500H1296M1296 532L1301 529V533L1298 535" stroke="#9a7f97" fill="none" />
      </svg>
      <div className="absolute top-0 right-[5px] text-right font-['Liberation_Sans',sans-serif] text-black">
        <div className="text-[29px] leading-[32px]">Ansys</div>
        <div className="text-lg leading-4">2024 R1</div>
      </div>
    </main>
  );
}

/* ---------- dialogs ---------- */

const HUES = [
  ["#ff0000", "#ffff00", "#00ff00", "#00ffff", "#0000ff", "#ff00ff"],
  ["#ff3300", "#d4ff00", "#00ff2a", "#00d4ff", "#2a00ff", "#ff00d4"],
  ["#ff5500", "#aaff00", "#00ff55", "#00aaff", "#5500ff", "#ff00aa"],
  ["#ff8000", "#80ff00", "#00ff80", "#0080ff", "#8000ff", "#ff0080"],
  ["#ffaa00", "#55ff00", "#00ffaa", "#0055ff", "#aa00ff", "#ff0055"],
  ["#000000", "#333333", "#666666", "#999999", "#cccccc", "#ffffff"],
];

function LabeledSlider({ id, label, value, className }) {
  return (
    <div className={"flex h-[22px] items-center " + className}>
      <label htmlFor={id} className="w-[110px] shrink-0 whitespace-nowrap">{label}</label>
      <Slider id={id} value={value} />
    </div>
  );
}

function SurfaceEditor() {
  return (
    <section role="dialog" aria-label="Surface property editor" className={"absolute top-[234px] left-[76px] w-[381px] rounded-lg border border-[#c3c0c4] bg-[#f0eeef] text-[10px] leading-[14px] shadow-md " + MONO}>
      <header className={"flex h-8 items-center rounded-t-lg bg-[#f5f0f6] pr-2.5 pb-0.5 pl-[7px] text-xs " + UI}>
        <EnLogo />
        <h2 className="ml-1.5 flex-1">Surface property editor</h2>
        <button aria-label="Close"><CloseX /></button>
      </header>
      <div className="flex">
        <div className="ml-[5px] w-[352px]">
          <div className={"h-[70px] border border-t-0 border-[#8c8c8c] bg-white pr-[15px] text-xs " + UI}>
            <table className="w-full table-fixed">
              <colgroup><col className="w-[199px]" /><col className="w-[44px]" /><col /></colgroup>
              <tbody>
                <tr>
                  <td className="bg-[#f0eff0] p-0"><div className="flex h-[13px] items-end overflow-hidden pl-0.5"><span className="leading-6">Constant color</span></div></td>
                </tr>
                <tr className="h-[25px]"><td className="pl-0.5">rel_tangential_velocity</td><td /><td className="pl-[3px]">Scalar</td></tr>
                <tr className="h-[25px]"><td className="pl-0.5">dz_velocity_dx</td><td /><td className="pl-[3px]">Scalar</td></tr>
              </tbody>
            </table>
          </div>
          <Btn className="mt-[22px] w-24">Edit palette...</Btn>
          <div className="mt-1 flex h-[103px] gap-[19px] border border-[#9c9c9c] pt-[3px] pl-px">
            <div className="h-[95px] w-[100px] border border-[#9c9c9c] bg-[#f4f4f4] pt-[3px] pl-0.5">
              <div className="grid w-[95px] grid-cols-[16px_16px_16px_16px_16px_9px] gap-px">
                {HUES.flat().map((c) => (
                  <button key={c} aria-label={c} className="h-[11px]" style={{ backgroundColor: c }} />
                ))}
              </div>
              <button className="mt-px block h-[17px] w-[94px] bg-black pl-2 text-white">More...</button>
            </div>
            <div className="mt-0.5 h-[91px] w-[166px] rounded-sm border-x-2 border-black bg-[linear-gradient(#33302f,#6d5a6c_14%,#a88ba7_30%,#cfabcd_48%,#cdaacb_60%,#a387a2_78%,#5d4d5c_92%,#2f282f)]" />
          </div>
          <Group title="Predefined materials" className="mt-1 h-[25px]" />
          <Group title="Lighting and shading" open className="mt-1 h-[201px]">
            <div className="mt-[11px] flex items-center">
              <label htmlFor="shading" className="w-[110px] shrink-0">Shading</label>
              <Select id="shading" value="Gouraud" className="w-full" />
            </div>
            <LabeledSlider id="ambient" label="Ambient" value={20} className="mt-0.5" />
            <LabeledSlider id="diffuse" label="Diffuse" value={80} className="mt-[3px]" />
            <LabeledSlider id="shine" label="Specular shine" value={12} className="mt-[6px]" />
            <LabeledSlider id="intensity" label="Specular intensity" value={1} className="mt-[3px]" />
            <LabeledSlider id="opacity" label="Opacity" value={100} className="mt-[9px]" />
            <div className="mt-[7px] grid grid-cols-[110px_1fr]">
              <Check id="double" label="Double sided" checked />
              <Check id="reverse" label="Reverse surface normal" disabled />
            </div>
          </Group>
          <Group title="Opacity by variable" className="mt-1 h-[25px]" />
          <Group title="Texture" className="mt-1 h-[25px]" />
          <Group title="Surface flow display" open className="mt-1 h-[54px]">
            <div className="mt-[14px] flex items-center justify-between pr-[3px] pl-0.5">
              <Check id="flowtex" label="Show flow texture" checked tone="red" />
              <Btn className="w-[168px]">Properties...</Btn>
            </div>
          </Group>
        </div>
        <div className="ml-[3px] flex w-[18px] justify-center border-l border-white">
          <span className="mt-[66px] mb-3 w-0.5 bg-[#868686]" />
        </div>
      </div>
      <footer className="mt-2 mb-0.5 flex justify-end gap-2 pr-[3px]">
        <Btn className="w-[73px]">Close</Btn>
        <Btn className="w-[73px]">Help</Btn>
      </footer>
    </section>
  );
}

function FlowSettings() {
  return (
    <section role="dialog" aria-label="Surface flow texture settings" className={"absolute top-[406px] left-[534px] w-[375px] rounded-lg border border-[#c3c0c4] bg-[#f0eeef] text-[10px] leading-[14px] shadow-md " + MONO}>
      <header className={"flex h-8 items-center rounded-t-lg bg-[#f5f0f6] pr-[17px] pb-0.5 pl-2 text-xs text-[#8a8a8a] " + UI}>
        <EnLogo />
        <h2 className="ml-1.5 flex-1">Surface flow texture settings</h2>
        <button aria-label="What's this" className="mr-9 text-sm">?</button>
        <button aria-label="Close"><CloseX s={11} /></button>
      </header>
      <div className="pr-[14px] pb-[11px] pl-[14px]">
        <p className="pt-4 whitespace-pre">Settings for case:  Case 1</p>
        <p className="mt-2">NOTE: The current case can be changed in the ′Case′<br />pulldown menu in the main menubar.</p>
        <div className="mt-[19px] h-[101px] border border-black px-2 pt-[9px]">
          <p>Choose an existing non-zero vector defined on the<br />surfaces, or create such a variable:</p>
          <div className="mt-[5px] flex items-center justify-end gap-[7px] pr-0.5">
            <label htmlFor="existing">Existing variable</label>
            <Select id="existing" value="MakeVect" className="w-[197px]" />
          </div>
          <div className="mt-[7px] flex justify-end pr-0.5"><Btn className="w-[228px]">Create/edit a surface vector variable</Btn></div>
        </div>
        <div className="mt-2 flex flex-col gap-2">
          <Check id="contrast" label="High contrast" />
          <Check id="normalize" label="Normalize vector field" checked />
        </div>
        <div className="mt-2 flex flex-col gap-1">
          <div className="flex h-[21px] items-center"><label htmlFor="length" className="w-[130px] shrink-0">Length</label><Spin id="length" value="0.44" className="mr-1 w-[78px]" /><Slider id="lengthbar" value={44} /></div>
          <div className="flex h-[21px] items-center"><label htmlFor="step" className="w-[130px] shrink-0">Integration step size</label><Spin id="step" value="0.50" className="mr-[5px] w-[78px]" /><Btn className="w-[91px]">Get default</Btn></div>
          <div className="flex h-[21px] items-center"><label htmlFor="bright" className="w-[130px] shrink-0">Brightness</label><Spin id="bright" value="0.50" className="mr-1 w-[78px]" /><Slider id="brightbar" value={50} /></div>
          <div className="flex h-[21px] items-center"><label htmlFor="density" className="w-[130px] shrink-0">Density</label><Spin id="density" value="9.999000e+03" className="mr-[5px] w-24" /><Btn className="w-[73px]">Get default</Btn></div>
        </div>
        <div className="mt-3 flex justify-end"><Btn className="w-[73px]">Help</Btn></div>
      </div>
    </section>
  );
}

/* ---------- callouts ---------- */

function Frame({ className }) {
  return <div className={"pointer-events-none absolute rounded-[3px] border-4 border-[#ff1205] " + className} />;
}

function Note({ className, children }) {
  return (
    <div className={"pointer-events-none absolute text-sm leading-4 font-bold whitespace-nowrap text-[#ff1205] [text-shadow:1px_0_#fff,-1px_0_#fff,0_1px_#fff,0_-1px_#fff] " + className}>
      {children}
    </div>
  );
}

export default function App() {
  return (
    <div className={"relative flex min-h-screen flex-col overflow-hidden bg-[#f0eeef] text-black " + UI}>
      <header className="flex h-[14px] items-end justify-between overflow-hidden bg-[#f3f0f3] pr-[19px] pl-[2px] text-[#858585]">
        <div className="flex h-5 items-center gap-1.5 text-[11px] leading-5 whitespace-pre"><EnLogo /><span>EnSight Standard 2024 R1 ::  (...ult\test5_chutu\20_BCD\result_lay\z-extractplt-simulation_B_nose_n2.5.plt)</span></div>
        <div className="flex h-6 items-center gap-9">
          <button aria-label="Minimize"><Svg s={12} box={12}><path d="M1 6h10" stroke="#777" /></Svg></button>
          <button aria-label="Restore"><Svg s={12} box={12}><path d="M1 3h8v8H1zM3 3V1h8v8H9" stroke="#777" /></Svg></button>
          <button aria-label="Close window"><CloseX /></button>
        </div>
      </header>
      <nav className="flex h-[23px] items-center gap-[17px] bg-[#fefdfe] pl-2 text-xs text-[#8f8f8f]">
        {["File", "Edit", "Create", "Query", "View", "Tools", "Window", "Case", "Reports", "Help"].map((m) => <button key={m}>{m}</button>)}
      </nav>
      <div className="flex h-[43px] border-t border-b border-t-[#e4e2e4] border-b-[#bdbbbd]">
        <div className="flex w-[564px] shrink-0 items-center border-r border-[#bdbbbd] pb-0.5 pl-1">
          <Grip />
          <span className="w-[3px]" />
          <BigTool label="Parts"><Puzzle c={["#e5512c", "#5aa0c8", "#3f8fca", "#5cc468"]} /></BigTool>
          <BigTool label="Calculator"><Calculator /></BigTool>
          <BigTool label="Plots"><Plot /></BigTool>
          <BigTool label="Query"><QueryHand /></BigTool>
          <BigTool label="Viewports" active><ViewportIcon /></BigTool>
          <BigTool label="Annotations"><LetterA /></BigTool>
          <BigTool label="States"><Book /></BigTool>
          <BigTool label="Flipbook"><Clapper /></BigTool>
          <BigTool label="Tools"><Toolbox /></BigTool>
          <span className="mx-[3px] h-8 w-px shrink-0 bg-[#cccccc]" />
          <BigTool label="Contours"><Contours /></BigTool>
          <BigTool label="Isosurfaces"><Drops /></BigTool>
          <BigTool label="Clips"><Scissors /></BigTool>
          <BigTool label="Vector arrows"><Vectors /></BigTool>
          <BigTool label="Particle traces"><FlowBall /></BigTool>
        </div>
        <div className="flex items-center pb-0.5 pl-1">
          <Grip />
          <span className="w-[3px]" />
          <SmallTool label="Part"><Puzzle s={24} c={["#a9a9a9", "#b3b3b3", "#a2a2a2", "#adadad"]} /></SmallTool>
          <SmallTool label="Visibility" active><Eye /></SmallTool>
          <SmallTool label="Color"><ColorWheel /></SmallTool>
          <SmallTool label="Line width" menu><LineWidths /></SmallTool>
          <SmallTool label="Viewport visibility"><EyeGrid /></SmallTool>
          <SmallTool label="Element representation" menu><GridCube /></SmallTool>
          <SmallTool label="Displacement"><Spring /></SmallTool>
          <SmallTool label="Symmetry"><Road /></SmallTool>
          <SmallTool label="Labels"><Nodes /></SmallTool>
          <SmallTool label="Nodes"><Triangle3 /></SmallTool>
          <SmallTool label="Failed elements"><Sprinkler /></SmallTool>
          <SmallTool label="Blanking"><Eraser /></SmallTool>
          <SmallTool label="Lighting" active><Sun /></SmallTool>
          <SmallTool label="Shaded" active><BlueCube /></SmallTool>
          <SmallTool label="Clip" active><ClipCylinder /></SmallTool>
          <SmallTool label="Fast display" menu><Bolt /></SmallTool>
        </div>
      </div>
      <div className="flex flex-1 pr-[3px]">
        <LeftDock />
        <div className="flex flex-1 pt-0.5 pb-1"><Scene /></div>
      </div>
      <div className="grid h-[33px] grid-cols-[579px_251px_307px_306px_1fr] items-start border-t-2 border-[#fbfafb]">
        <div className="flex items-center pl-1">
          <Grip />
          <span className="w-[347px]" />
          <TinyTool label="Record"><Record /></TinyTool>
          <TinyTool label="Pick" menu><Hand /></TinyTool>
        </div>
        <div className="flex h-7 items-center">
          <TinyTool label="Lighting toggle" active><Sun s={20} /></TinyTool>
          <TinyTool label="Hidden line"><WireCube /></TinyTool>
          <TinyTool label="Highlight"><ClickBurst /></TinyTool>
        </div>
        <div className="flex h-7 items-center">
          <TinyTool label="Add viewport"><AddFrame /></TinyTool>
          <TinyTool label="Axes"><Axes /></TinyTool>
          <TinyTool label="Line tool"><ArrowUp /></TinyTool>
          <TinyTool label="Plane tool"><DoorArrow /></TinyTool>
          <TinyTool label="Settings" menu><Wrench /></TinyTool>
        </div>
        <div className="flex h-7 items-center">
          <TinyTool label="Reset" menu><ResetCircle /></TinyTool>
          <TinyTool label="Fast"><Bolt s={20} c="#bdbdbd" e="#8f8f8f" /></TinyTool>
          <TinyTool label="Fit"><BallArrows /></TinyTool>
          <TinyTool label="Previous view"><TurnBack /></TinyTool>
          <TinyTool label="View" menu><ViewCone /></TinyTool>
        </div>
        <div className="flex h-7 items-center">
          <TinyTool label="Information"><InfoIcon /></TinyTool>
          <TinyTool label="Undo"><Undo /></TinyTool>
          <span className="mr-1 ml-px h-7 w-px bg-[#b5b5b5]" />
          <Grip />
          <div className="ml-[5px] flex border-t border-l border-[#888888]">
            <div className="grid grid-cols-4 gap-px bg-[#cccccc]">
              {["#ff0000", "#ffff00", "#0000ff", "#666666", "#00ff00", "#00ffff", "#999999", "#ffffff"].map((c) => (
                <button key={c} aria-label={"Color " + c} className="h-[11px] w-[11px]" style={{ backgroundColor: c }} />
              ))}
            </div>
            <span className="ml-0.5 w-[22px] bg-[#cdacca]" />
          </div>
        </div>
      </div>
      <footer className="flex h-[17px] items-center pl-1.5 text-xs">plane-x-987-5 Step 1 Incr 0: 24235 client 34484 server elements</footer>

      <SurfaceEditor />
      <FlowSettings />

      <Frame className="top-[207px] left-[2px] h-6 w-[514px]" />
      <Note className="top-[189px] left-[442px]">1 选择你所要展示的面</Note>
      <Frame className="top-[26px] left-[627px] h-[60px] w-14" />
      <Note className="top-[95px] left-[642px]">2</Note>
      <Frame className="top-[803px] left-[244px] h-[54px] w-[198px]" />
      <Note className="top-[787px] left-[370px]">3</Note>
      <Frame className="top-[553px] left-[650px] h-[37px] w-[269px]" />
      <Note className="top-[541px] left-[910px]">4 选择刚才计算的速度矢量</Note>
      <Frame className="top-[799px] left-[80px] h-[41px] w-[63px]" />
      <Note className="top-[844px] left-[87px]">5 打勾激活</Note>
    </div>
  );
}
